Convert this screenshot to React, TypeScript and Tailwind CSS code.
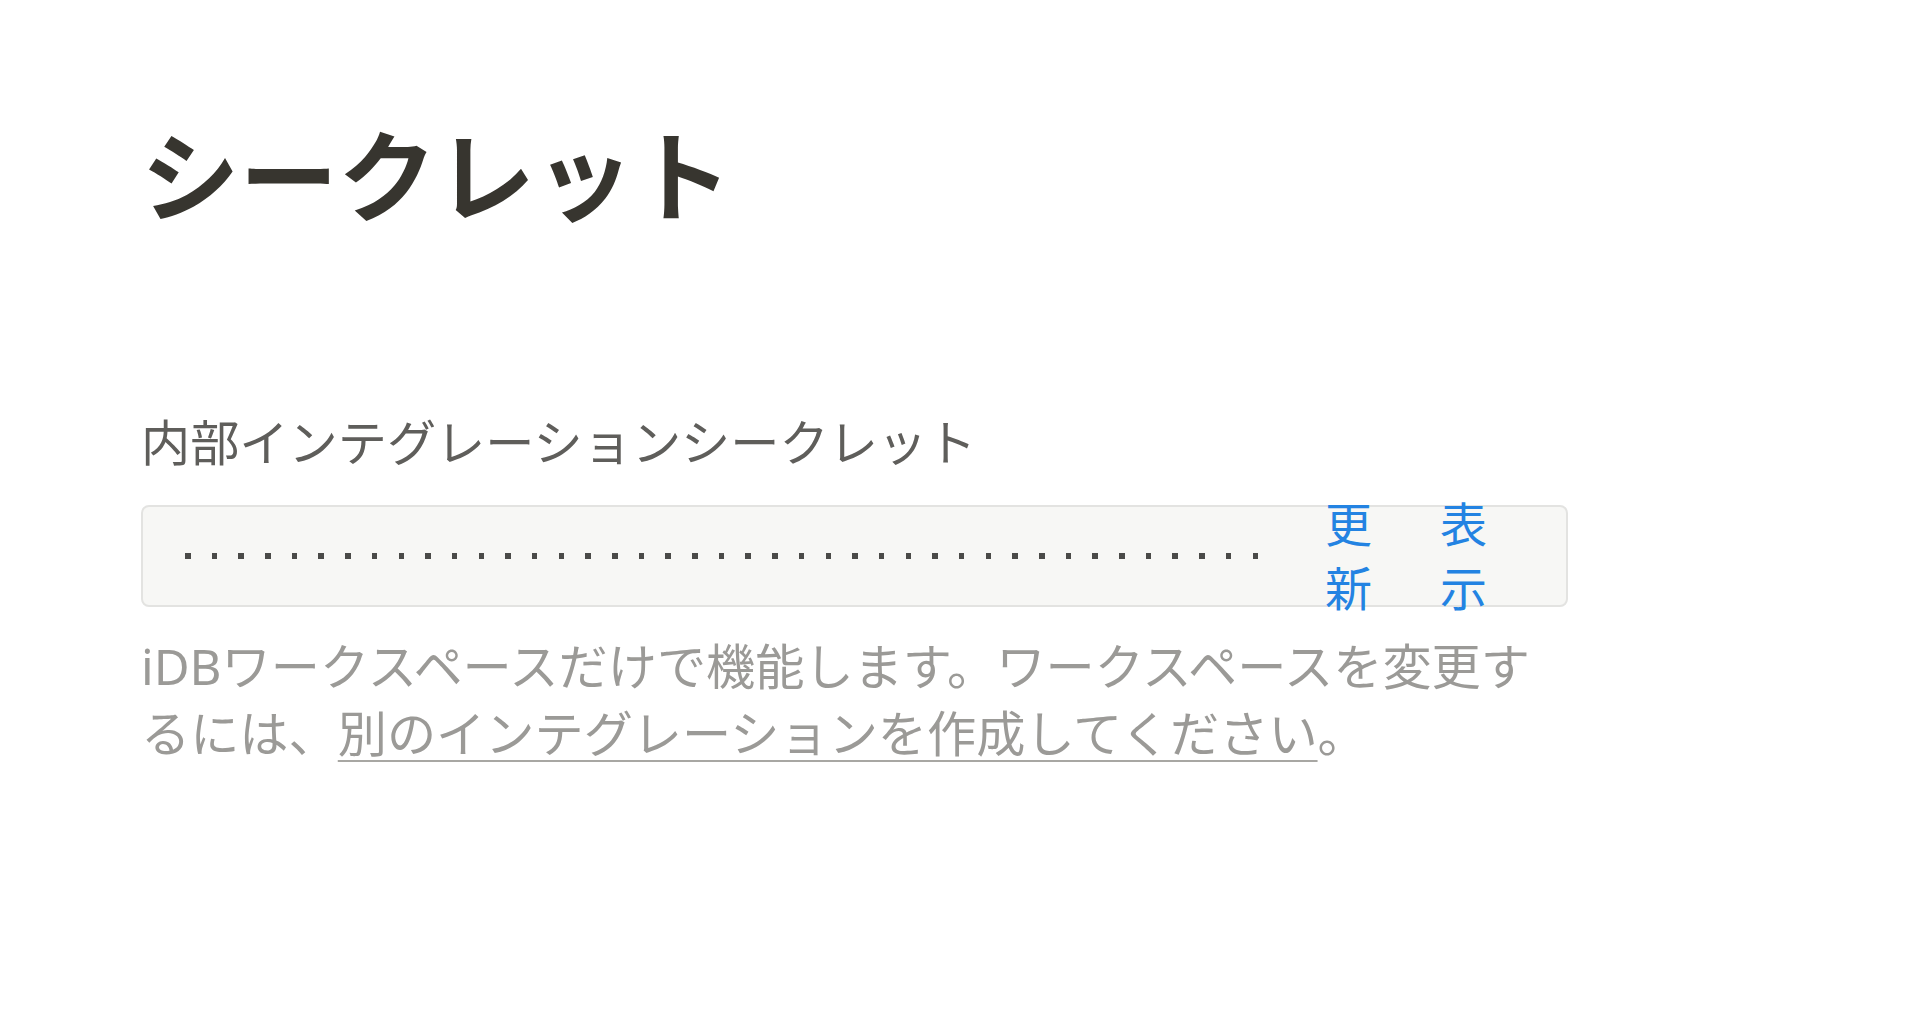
import React from "react";

const FONT = '"Noto Sans", "Noto Sans CJK JP", sans-serif';

export default function App() {
  const dots = Array.from({ length: 41 });
  return (
    <div
      className="min-h-screen bg-white pl-[141px] pt-[116px]"
      style={{ fontFamily: FONT }}
    >
      <h1 className="text-[98.5px] leading-[120px] font-bold text-[#37352f]">
        シークレット
      </h1>
      <div className="mt-[174px] text-[49.2px] leading-[64px] text-[#5f5e5b]">
        内部インテグレーションシークレット
      </div>
      <div className="mt-[31px] flex h-[102px] w-[1427px] items-center rounded-[8px] border-2 border-[#e3e3e1] bg-[#f7f7f5]">
        <div className="flex flex-1 items-center gap-[21.2px] pl-[42px]">
          {dots.map((_, i) => (
            <span key={i} className="block h-[6px] w-[5.5px] bg-[#4a4a48]" />
          ))}
        </div>
        <div className="flex items-center gap-[67px] pr-[78px]">
          <button className="w-[48px] text-left text-[47px] leading-[64px] text-[#2383e2]">
            更新
          </button>
          <button className="w-[48px] text-left text-[47px] leading-[64px] text-[#2383e2]">
            表示
          </button>
        </div>
      </div>
      <p className="mt-[25px] w-[1427px] text-[49.2px] leading-[67px] text-[#9b9a97]">
        iDBワークスペースだけで機能します。ワークスペースを変更す
        <br />
        るには、
        <a className="underline decoration-[#a8a7a3] decoration-2 underline-offset-[8px]">
          別のインテグレーションを作成してください
        </a>
        。
      </p>
    </div>
  );
}
